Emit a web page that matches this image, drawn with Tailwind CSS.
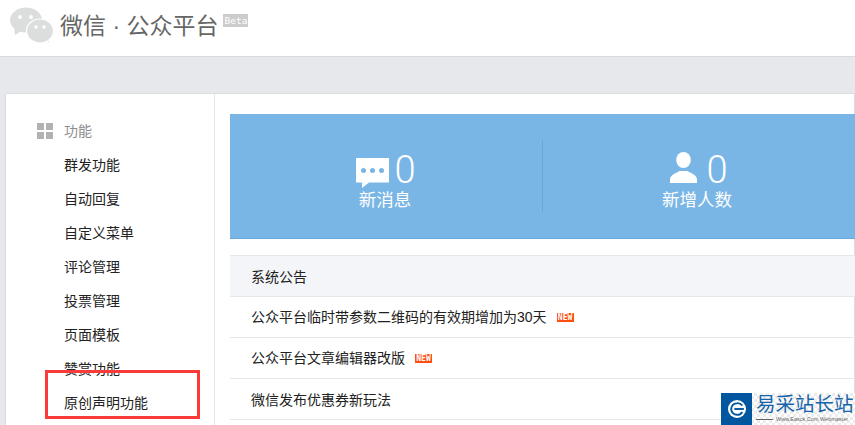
<!DOCTYPE html>
<html lang="zh">
<head>
<meta charset="utf-8">
<script src="https://cdn.jsdelivr.net/npm/@tailwindcss/browser@4"></script>
</head>
<body class="m-0 overflow-hidden">
<div class="relative w-[855px] h-[425px] overflow-hidden bg-[#e7e8eb] font-['Liberation_Sans','Noto_Sans_CJK_SC',sans-serif] text-[#222]">
  <header class="h-[57px] bg-white border-b border-[#d9dadd] flex items-start pl-[9px]">
    <svg class="mt-[7px] w-[45px] h-[37px]" viewBox="0 0 45 37" fill="#dcdedd">
      <ellipse cx="17" cy="13" rx="16" ry="12.500"/>
      <path d="M5 20l1 8 8-5z"/>
      <path d="M34 30l6 6-1-9z"/>
      <ellipse cx="31" cy="24" rx="13.500" ry="12" stroke="#fff" stroke-width="1.200"/>
      <circle cx="11" cy="10" r="1.900" fill="#fff"/><circle cx="22" cy="10" r="1.900" fill="#fff"/>
      <circle cx="27" cy="20" r="1.700" fill="#fff"/><circle cx="35" cy="20" r="1.700" fill="#fff"/>
    </svg>
    <div class="ml-[6px] mt-[11px] text-[23px] leading-[30px] text-[#666] whitespace-nowrap">微信 · 公众平台</div>
    <div class="ml-[5px] mt-[14px] w-[25px] h-[13px] bg-[#ccc] text-white text-[9.500px] leading-[13px] text-center font-['DejaVu_Sans_Mono',monospace]">Beta</div>
  </header>
  <main class="mt-[36px] ml-[5px] bg-white border border-[#dcdde0] flex h-[400px]">
    <nav class="w-[209px] shrink-0 border-r border-[#e7e7eb] pt-[20px] pl-[31px]">
      <div class="flex items-center h-[34px] text-[14px] text-[#8d8d8d]">
        <span class="grid grid-cols-2 gap-[2px] w-[16px] h-[16px] mr-[11px]">
          <i class="bg-[#b2b2b2]"></i><i class="bg-[#b2b2b2]"></i><i class="bg-[#b2b2b2]"></i><i class="bg-[#b2b2b2]"></i>
        </span>功能
      </div>
      <ul class="pl-[27px] text-[14px] text-[#222]">
        <li class="h-[34px] leading-[34px]">群发功能</li>
        <li class="h-[34px] leading-[34px]">自动回复</li>
        <li class="h-[34px] leading-[34px]">自定义菜单</li>
        <li class="h-[34px] leading-[34px]">评论管理</li>
        <li class="h-[34px] leading-[34px]">投票管理</li>
        <li class="h-[34px] leading-[34px]">页面模板</li>
        <li class="h-[34px] leading-[34px]">赞赏功能</li>
        <li class="h-[34px] leading-[34px]">原创声明功能</li>
      </ul>
    </nav>
    <section class="flex-1 pl-[15px] pt-[20px] min-w-0">
      <div class="h-[125px] w-[640px] bg-[#7ab6e5] border-b border-[#6aa8da] flex pt-[26px] text-white">
        <div class="w-[313px] h-[72px] border-r border-[#6ba6d6] pt-[12px] flex flex-col items-center">
          <div class="flex items-start h-[31px]">
            <svg class="w-[33px] h-[30px] mt-[6px] mr-[5px]" viewBox="0 0 33 30" fill="#fff">
              <path d="M0 0h33v24.500H13l-7 5.500v-5.500H0z"/>
              <circle cx="7.500" cy="12.500" r="2.500" fill="#7ab6e5"/><circle cx="16.500" cy="12.500" r="2.500" fill="#7ab6e5"/><circle cx="25.500" cy="12.500" r="2.500" fill="#7ab6e5"/>
            </svg>
            <span class="text-[38px] leading-[31px] mt-[3px] font-['Roboto',sans-serif] font-light">0</span>
          </div>
          <div class="text-[17.500px] leading-[24px] mt-[5px] -ml-[2px]">新消息</div>
        </div>
        <div class="w-[308px] pt-[12px] flex flex-col items-center">
          <div class="flex items-start h-[31px] ml-[4px]">
            <svg class="w-[27px] h-[31px] mr-[9px]" viewBox="0 0 27 31" fill="#fff">
              <ellipse cx="13.500" cy="8" rx="7.300" ry="8"/>
              <path d="M0 31v-3.500c0-4.500 5.500-6 9.500-8.500h8c4 2.500 9.500 4 9.500 8.500V31z"/>
            </svg>
            <span class="text-[38px] leading-[31px] mt-[3px] font-['Roboto',sans-serif] font-light">0</span>
          </div>
          <div class="text-[17.500px] leading-[24px] mt-[5px]">新增人数</div>
        </div>
      </div>
      <div class="mt-[16px] w-[640px] text-[14px]">
        <div class="h-[42px] bg-[#f4f5f9] border-y border-[#e7e7eb] pl-[21px] leading-[42px]">系统公告</div>
        <div class="h-[41px] border-b border-[#e7e7eb] pl-[21px] flex items-center">公众平台临时带参数二维码的有效期增加为30天<span class="ml-[10px] w-[17px] h-[9px] bg-[#fd4f13] text-white text-[8px] leading-[9px] text-center font-bold font-['DejaVu_Sans_Mono',monospace] overflow-hidden">NEW</span></div>
        <div class="h-[41px] border-b border-[#e7e7eb] pl-[21px] flex items-center">公众平台文章编辑器改版<span class="ml-[10px] w-[17px] h-[9px] bg-[#fd4f13] text-white text-[8px] leading-[9px] text-center font-bold font-['DejaVu_Sans_Mono',monospace] overflow-hidden">NEW</span></div>
        <div class="h-[41px] border-b border-[#e7e7eb] pl-[21px] pt-[2px] flex items-center">微信发布优惠券新玩法</div>
      </div>
    </section>
  </main>
  <div class="absolute left-[45px] top-[370px] w-[155px] h-[49px] border-[3px] border-[#fb3a3a]"></div>
  <div class="absolute left-[721px] top-[393px] w-[134px] h-[32px] bg-[repeating-conic-gradient(#ececec_0_25%,#fff_0_50%)] bg-[length:6px_6px] flex">
    <div class="w-[31px] h-[32px] bg-[#00579f] flex items-center justify-center">
      <svg class="w-[18px] h-[18px]" viewBox="0 0 17 17">
        <circle cx="8.500" cy="8.500" r="8.500" fill="#fff"/>
        <path d="M13.500 5.200A5.500 5.500 0 0 0 8.500 3a5.500 5.500 0 0 0 0 11 5.500 5.500 0 0 0 5-2.700" fill="none" stroke="#00579f" stroke-width="1.800"/>
        <path d="M6 8.500h9" stroke="#00579f" stroke-width="1.800"/>
      </svg>
    </div>
    <div class="ml-[4px] min-w-0">
      <div class="text-[#1565a8] text-[19.500px] leading-[22px] whitespace-nowrap">易采站长站</div>
      <div class="flex items-center gap-[3px] h-[9px]">
        <span class="w-[17px] h-px bg-[#666] shrink-0"></span>
        <span class="text-[5.500px] leading-[9px] text-[#666] whitespace-nowrap">Www.Easck.Com Webmaster</span>
      </div>
    </div>
  </div>
</div>
</body>
</html>
